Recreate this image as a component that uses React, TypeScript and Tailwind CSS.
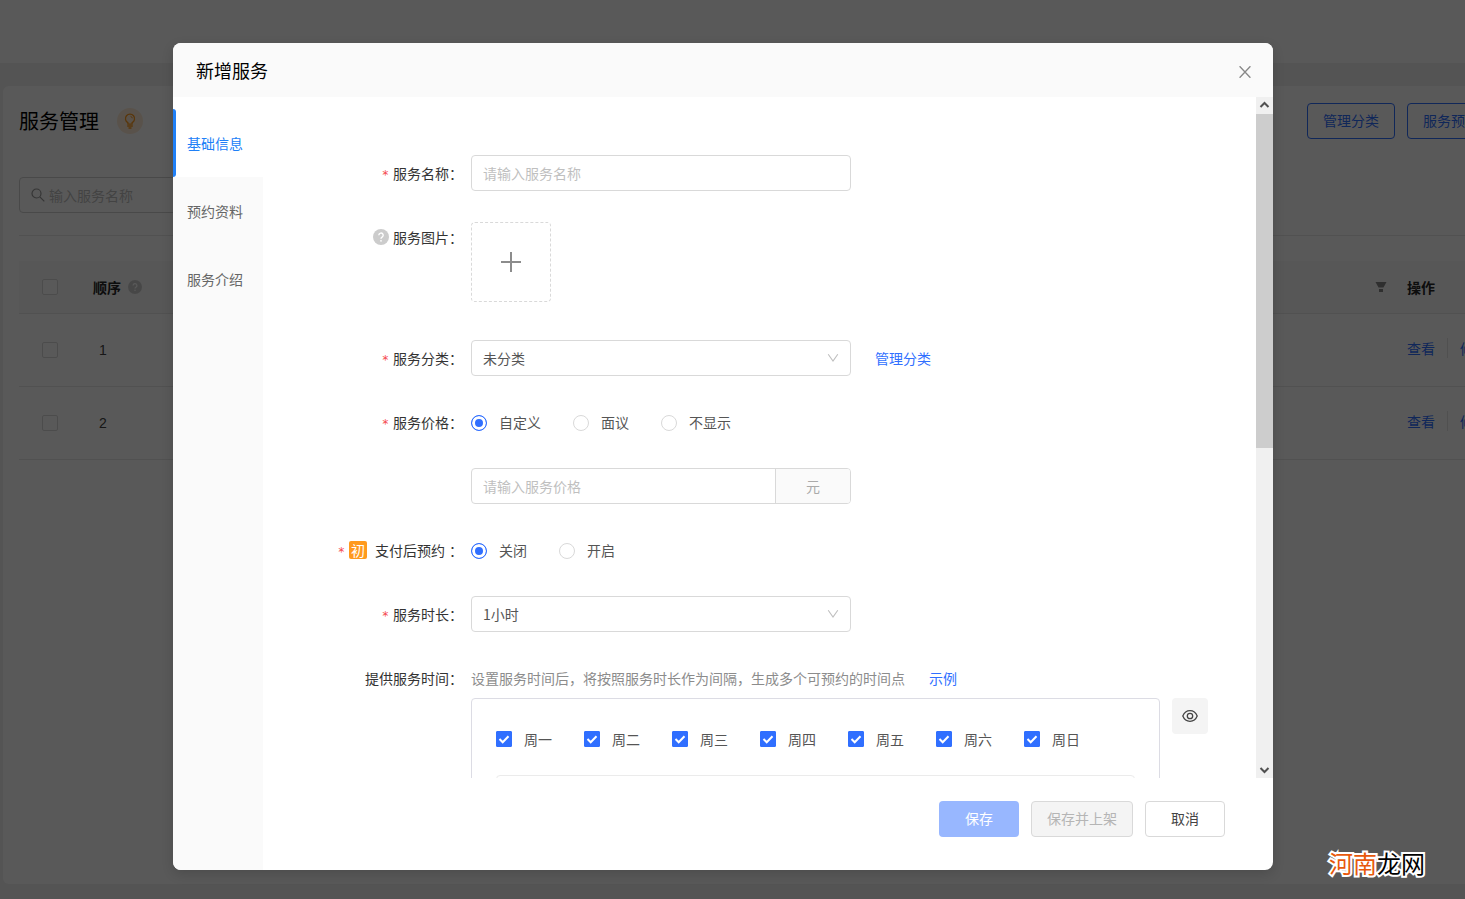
import React, { ReactNode } from "react";

const tabs = ["基础信息", "预约资料", "服务介绍"];
const days = ["周一", "周二", "周三", "周四", "周五", "周六", "周日"];

function Help({ className }: { className: string }) {
  return (
    <svg viewBox="0 0 16 16" className={className} aria-hidden="true">
      <circle cx="8" cy="8" r="8" fill="currentColor" />
      <path d="M5.8 6.3a2.2 2.2 0 1 1 3.3 1.9c-.8.5-1.1.8-1.1 1.6" fill="none" stroke="#fff" strokeWidth="1.4" />
      <circle cx="8" cy="11.8" r="0.9" fill="#fff" />
    </svg>
  );
}

function Row({
  label,
  htmlFor,
  required,
  lead,
  wideColon,
  children,
}: {
  label: string;
  htmlFor?: string;
  required?: boolean;
  lead?: ReactNode;
  wideColon?: boolean;
  children: ReactNode;
}) {
  return (
    <div className="flex items-start">
      <div className="flex h-9 w-[208px] shrink-0 items-center justify-end pr-2 text-[#333]">
        {required && (
          <span className="mr-1 pt-1 font-['DejaVu_Sans_Mono',monospace] text-xs text-[#f5494d]">*</span>
        )}
        {lead}
        <label htmlFor={htmlFor}>{label}</label>
        <span className={wideColon ? "ml-1" : ""}>：</span>
      </div>
      <div className="min-w-0 flex-1">{children}</div>
    </div>
  );
}

function Select({ id, value }: { id: string; value: string }) {
  return (
    <div className="grid w-[380px] items-center">
      <select
        id={id}
        className="col-start-1 row-start-1 h-9 w-full appearance-none rounded border border-[#d9d9d9] bg-white px-[11px] text-sm text-[#555]"
      >
        <option>{value}</option>
      </select>
      <svg
        viewBox="0 0 12 12"
        className="pointer-events-none col-start-1 row-start-1 mr-3 size-3 justify-self-end"
        fill="none"
        stroke="#bfbfbf"
        strokeWidth="1.1"
        aria-hidden="true"
      >
        <path d="M1.2 2.2 6 9l4.8-6.8" />
      </svg>
    </div>
  );
}

function Radios({ name, options }: { name: string; options: string[] }) {
  return (
    <div className="flex h-9 items-center gap-8">
      {options.map((o, i) => (
        <label key={o} className="flex items-center gap-3 text-[#555]">
          <input
            type="radio"
            name={name}
            defaultChecked={i === 0}
            className="mt-0.5 size-4 appearance-none rounded-full border border-[#d9d9d9] bg-white checked:border-[#306fff] checked:bg-[#306fff] checked:shadow-[inset_0_0_0_3px_#fff]"
          />
          {o}
        </label>
      ))}
    </div>
  );
}

function RowCheck({ label }: { label: string }) {
  return (
    <input
      type="checkbox"
      aria-label={label}
      className="mx-auto block size-4 appearance-none rounded-xs border border-[#d9d9d9] bg-white"
    />
  );
}

function Background() {
  return (
    <div className="flex min-h-screen flex-col bg-[#f0f0f0]" aria-hidden="true">
      <header className="h-[63px] bg-white" />
      <main className="mt-[23px] mr-[-46px] mb-[15px] ml-[3px] flex-1 rounded-md bg-white px-4 pt-[17px]">
        <div className="flex h-9 items-center">
          <h1 className="text-xl text-black">服务管理</h1>
          <span className="ml-[18px] flex size-[26px] items-center justify-center rounded-full bg-[#ffecd6]">
            <svg viewBox="0 0 16 18" className="h-4 w-[14px]" fill="none" stroke="#ff9a1e" strokeWidth="1.5">
              <path d="M5.6 12.5v-1.6A5.2 5.2 0 1 1 10.4 10.900v1.6z" />
              <path d="M8.600 3.600a2.600 2.600 0 0 1 2 2.300" strokeWidth="1.1" />
              <path d="M4.800 14.700h6.400M6.300 17h3.400" />
            </svg>
          </span>
          <div className="ml-auto flex gap-3">
            <button className="h-9 w-[88px] rounded border border-[#306fff] pb-0.5 text-[#306fff]">管理分类</button>
            <button className="h-9 w-[88px] rounded border border-[#306fff] pb-0.5 text-[#306fff]">服务预览</button>
          </div>
        </div>
        <div className="mt-[38px] flex h-9 w-60 items-center gap-1 rounded border border-[#d0d0d0] pl-[11px]">
          <svg viewBox="0 0 14 14" className="size-[14px] shrink-0" fill="none" stroke="#999" strokeWidth="1.2">
            <circle cx="5.500" cy="5.500" r="4.500" />
            <path d="m8.800 8.800 4.500 4.500" />
          </svg>
          <input
            aria-label="输入服务名称"
            placeholder="输入服务名称"
            className="min-w-0 flex-1 bg-transparent placeholder:text-[#bfbfbf]"
          />
        </div>
        <div className="mt-[22px] mb-[25px] border-t border-[#e8e8e8]" />
        <table className="w-full table-fixed border-collapse text-left">
          <colgroup>
            <col className="w-[62px]" />
            <col className="w-[120px]" />
            <col />
            <col className="w-[88px]" />
          </colgroup>
          <thead>
            <tr className="h-[52px] border-b border-[#e8e8e8] bg-[#fafafa] text-[#262626]">
              <th><RowCheck label="全选" /></th>
              <th className="pl-3 font-bold">
                <span className="flex items-center gap-[7px]">
                  顺序
                  <Help className="size-[14px] text-[#ccc]" />
                </span>
              </th>
              <th>
                <svg viewBox="0 0 12 12" className="mr-5 ml-auto size-3" fill="#888">
                  <path d="M0.500 1h11L8.500 6.500h-5zM4 8h4v3H4z" />
                </svg>
              </th>
              <th className="font-bold">操作</th>
            </tr>
          </thead>
          <tbody>
            {["1", "2"].map((n) => (
              <tr key={n} className="h-[73px] border-b border-[#e8e8e8]">
                <td><RowCheck label={n} /></td>
                <td className="pl-[18px] font-['Liberation_Sans',sans-serif] text-[#444]">{n}</td>
                <td />
                <td className="pb-1">
                  <div className="flex items-center gap-3 whitespace-nowrap">
                    <a href="#view" className="text-[#306fff]">查看</a>
                    <span className="h-5 w-px bg-[#e6e6e6]" />
                    <a href="#edit" className="text-[#306fff]">修改</a>
                  </div>
                </td>
              </tr>
            ))}
          </tbody>
        </table>
      </main>
    </div>
  );
}

function Scrollbar() {
  return (
    <div className="flex w-[17px] shrink-0 flex-col bg-[#f0f0f0]" aria-hidden="true">
      <svg viewBox="0 0 17 17" className="size-[17px] shrink-0" fill="none" stroke="#505050" strokeWidth="2">
        <path d="m4.500 10 4-4 4 4" />
      </svg>
      <div className="flex-1">
        <div className="h-[334px] max-h-full bg-[#cdcdcd]" />
      </div>
      <svg viewBox="0 0 17 17" className="size-[17px] shrink-0" fill="none" stroke="#505050" strokeWidth="2">
        <path d="m4.500 7 4 4 4-4" />
      </svg>
    </div>
  );
}

export default function App() {
  return (
    <div className="relative min-h-screen overflow-hidden font-['Noto_Sans_CJK_SC',sans-serif] text-sm leading-5">
      <Background />
      <div className="absolute inset-0 flex justify-center bg-black/65 pt-[43px] pr-[19px] pb-[29px]">
        <section
          role="dialog"
          aria-labelledby="dialog-title"
          className="flex w-full max-w-[1100px] flex-col overflow-hidden rounded-lg bg-white shadow-[0_4px_12px_rgba(0,0,0,0.15)]"
        >
          <header className="flex h-[54px] shrink-0 items-center justify-between bg-[#fafafa] pr-[22px] pl-[23px]">
            <h2 id="dialog-title" className="text-lg text-black">新增服务</h2>
            <button aria-label="关闭">
              <svg viewBox="0 0 12 12" className="mt-1 size-3" fill="none" stroke="#888" strokeWidth="1.3">
                <path d="m.6.2 10.800 11.600M11.400.2.6 11.800" />
              </svg>
            </button>
          </header>
          <div className="flex min-h-0 flex-1">
            <nav className="w-[90px] shrink-0 border-t-[12px] border-white bg-[#fafafa]">
              {tabs.map((t, i) => (
                <button
                  key={t}
                  className={
                    i === 0
                      ? "flex h-[68px] w-full items-center bg-white text-[#2080f7]"
                      : "flex h-[68px] w-full items-center text-[#666]"
                  }
                >
                  <span className={i === 0 ? "mr-[11px] h-full w-[3px] rounded-r-sm bg-[#2080f7]" : "mr-[11px] w-[3px]"} />
                  {t}
                </button>
              ))}
            </nav>
            <div className="flex min-w-0 flex-1 flex-col">
              <div className="flex min-h-0 flex-1">
                <form className="flex min-w-0 flex-1 flex-col gap-7 overflow-hidden pt-[58px]">
                  <Row label="服务名称" htmlFor="name" required>
                    <input
                      id="name"
                      placeholder="请输入服务名称"
                      className="block h-9 w-[380px] rounded border border-[#d9d9d9] px-[11px] placeholder:text-[#bfbfbf]"
                    />
                  </Row>
                  <Row label="服务图片" lead={<Help className="mr-1 size-4 text-[#ccc]" />}>
                    <button
                      type="button"
                      aria-label="上传图片"
                      className="mt-[3px] mb-[10px] flex size-20 items-center justify-center rounded border border-dashed border-[#d9d9d9]"
                    >
                      <svg viewBox="0 0 20 20" className="size-5" fill="none" stroke="#8c8c8c" strokeWidth="2">
                        <path d="M10 0v20M0 10h20" />
                      </svg>
                    </button>
                  </Row>
                  <Row label="服务分类" htmlFor="category" required>
                    <div className="flex items-center gap-6">
                      <Select id="category" value="未分类" />
                      <a href="#categories" className="text-[#306fff]">管理分类</a>
                    </div>
                  </Row>
                  <Row label="服务价格" htmlFor="price" required>
                    <Radios name="price-mode" options={["自定义", "面议", "不显示"]} />
                    <div className="mt-7 flex h-9 w-[380px] overflow-hidden rounded border border-[#d9d9d9]">
                      <input
                        id="price"
                        placeholder="请输入服务价格"
                        className="min-w-0 flex-1 px-[11px] placeholder:text-[#bfbfbf]"
                      />
                      <span className="flex w-[75px] items-center justify-center border-l border-[#d9d9d9] bg-[#fafafa] text-[#aaa]">
                        元
                      </span>
                    </div>
                  </Row>
                  <Row
                    label="支付后预约"
                    required
                    wideColon
                    lead={
                      <span className="mr-2 flex size-[18px] items-center justify-center rounded-xs bg-[#ff9a1e] text-white">
                        初
                      </span>
                    }
                  >
                    <Radios name="prepay" options={["关闭", "开启"]} />
                  </Row>
                  <Row label="服务时长" htmlFor="duration" required>
                    <Select id="duration" value="1小时" />
                  </Row>
                  <Row label="提供服务时间">
                    <div className="flex h-9 items-center gap-6 text-[#8c8c8c]">
                      <span>设置服务时间后，将按照服务时长作为间隔，生成多个可预约的时间点</span>
                      <a href="#example" className="text-[#306fff]">示例</a>
                    </div>
                    <div className="mt-0.5 flex items-start gap-3 pr-12">
                      <div className="min-w-0 flex-1 rounded border border-[#dcdce4] px-6 pt-[22px] pb-6">
                        <div className="flex h-9 items-center gap-8 text-[#555]">
                          {days.map((d) => (
                            <label key={d} className="flex items-center gap-3">
                              <span className="grid size-4">
                                <input
                                  type="checkbox"
                                  defaultChecked
                                  className="col-start-1 row-start-1 size-4 appearance-none rounded-[1px] border border-[#d9d9d9] checked:border-[#306fff] checked:bg-[#306fff]"
                                />
                                <svg
                                  viewBox="0 0 16 16"
                                  className="pointer-events-none col-start-1 row-start-1 size-4"
                                  fill="none"
                                  stroke="#fff"
                                  strokeWidth="2"
                                  aria-hidden="true"
                                >
                                  <path d="m3.500 8 3.200 3.200 5.800-6" />
                                </svg>
                              </span>
                              {d}
                            </label>
                          ))}
                        </div>
                        <div className="mt-[18px] h-40 rounded border border-[#ebebeb]" />
                      </div>
                      <button
                        type="button"
                        aria-label="预览"
                        className="flex size-9 shrink-0 items-center justify-center rounded bg-[#f4f4f4]"
                      >
                        <svg viewBox="0 0 16 16" className="size-4" fill="none" stroke="#444" strokeWidth="1.3">
                          <path d="M.8 8C2.300 4.300 4.900 2.700 8 2.700S13.700 4.300 15.200 8C13.700 11.700 11.100 13.300 8 13.300S2.300 11.700.8 8z" />
                          <circle cx="8" cy="8" r="2.700" />
                        </svg>
                      </button>
                    </div>
                  </Row>
                </form>
                <Scrollbar />
              </div>
              <footer className="flex h-[92px] shrink-0 items-start justify-end gap-3 pt-[23px] pr-12">
                <button className="h-9 w-20 rounded bg-[#98b7ff] pb-0.5 text-white">保存</button>
                <button disabled className="h-9 w-[102px] rounded border border-[#d9d9d9] bg-[#f4f4f4] pb-0.5 text-[#b5b5b5]">
                  保存并上架
                </button>
                <button className="h-9 w-20 rounded border border-[#d9d9d9] bg-white pb-0.5 text-[#444]">取消</button>
              </footer>
            </div>
          </div>
        </section>
      </div>
      <p className="absolute right-10 bottom-[22px] text-2xl leading-7 text-black [-webkit-text-stroke:4px_white] [paint-order:stroke_fill]">
        <span className="text-[#e8590c]">河南</span>龙网
      </p>
    </div>
  );
}
